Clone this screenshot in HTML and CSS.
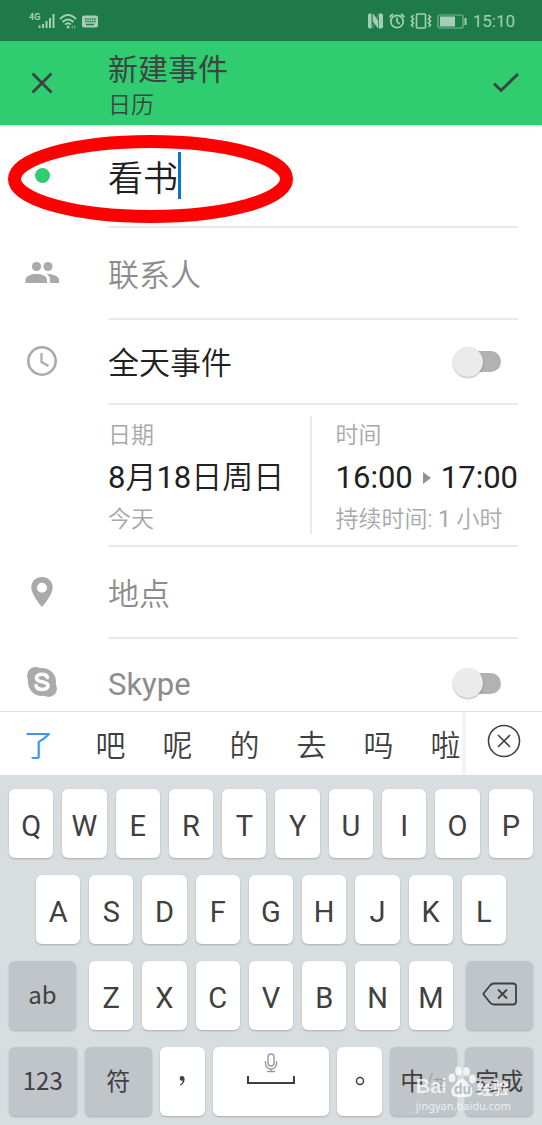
FILE: index.html
```html
<!DOCTYPE html>
<html lang="zh-CN">
<head>
<meta charset="utf-8">
<meta name="viewport" content="width=device-width, initial-scale=1">
<title>新建事件</title>
<link rel="stylesheet" href="styles.css">
</head>
<body>
<div class="status">
  <div class="status-group">
    <svg class="icon" width="28" height="20" viewBox="0 0 28 20">
      <text class="net" x="1" y="9">4G</text>
      <path d="M11.500 14.500v2.500M15 13v4M18.500 10v7M22 7v10M25.500 3v14" stroke="currentColor" stroke-width="2"/>
    </svg>
    <svg class="icon" width="20" height="20" viewBox="0 0 20 20">
      <path d="M2 8q8-8 16 0M4.500 11q5.500-5 11 0M7 13.500q3-2.500 6 0" fill="none" stroke="currentColor" stroke-width="2"/>
      <circle cx="10" cy="16" r="1.500" fill="currentColor"/><path d="M13 16l2-2v4zM18 16l-2-2v4z" fill="currentColor" opacity=".6"/>
    </svg>
    <svg class="icon" width="20" height="20" viewBox="0 0 20 20">
      <rect x="2" y="4.500" width="16" height="12" rx="2" fill="currentColor"/>
      <path d="M5 8h11M5 10.500h11" stroke="#1e7a46" stroke-width="1.500" stroke-dasharray="1.500 .8"/><path d="M6 13.500h8" stroke="#1e7a46" stroke-width="1.500"/>
    </svg>
  </div>
  <div class="status-group">
    <svg class="icon" width="20" height="20" viewBox="0 0 20 20">
      <path d="M6.500 2.500H5Q3 2.500 3 4.500v11q0 2 2 2h1.500zM14 2.500h2q2 0 2 2v11q0 2-2 2h-2z" fill="currentColor"/>
      <path d="M8 3l5 6.500v7.500L8 10.500zM8 13v4M13 3v4" fill="currentColor" stroke="currentColor" stroke-width=".6"/>
    </svg>
    <svg class="icon" width="20" height="20" viewBox="0 0 20 20" fill="none" stroke="currentColor" stroke-width="1.700">
      <circle cx="10" cy="10.500" r="6.200"/><path d="M10 6.500v4.200l2.500 2.500M2.500 6l3.500-3M17.500 6L14 3"/>
    </svg>
    <svg class="icon" width="24" height="20" viewBox="0 0 24 20" fill="none" stroke="currentColor" stroke-width="1.600">
      <rect x="7.500" y="3" width="9" height="14" rx="1"/><path d="M4.500 4l-2 2 2 2-2 2 2 2-2 2 2 2M19.500 4l2 2-2 2 2 2-2 2 2 2-2 2"/>
    </svg>
    <svg class="icon" width="32" height="20" viewBox="0 0 32 20">
      <rect x="3" y="4" width="25" height="13" rx="2" fill="none" stroke="currentColor" stroke-width="1.200" opacity=".7"/>
      <rect x="5" y="5.500" width="15" height="10" fill="currentColor"/><path d="M30.500 7v7" stroke="currentColor" stroke-width="2"/>
    </svg>
    <span class="clock">15:10</span>
  </div>
</div>

<header class="header">
  <button class="icon-button" type="button" aria-label="关闭">
    <svg class="icon" width="24" height="24" viewBox="0 0 24 24"><path d="M2.500 2.500l19 19M21.500 2.500l-19 19" stroke="currentColor" stroke-width="2.800"/></svg>
  </button>
  <div class="heading">
    <h1 class="heading-title">新建事件</h1>
    <div class="heading-sub">日历</div>
  </div>
  <button class="icon-button save" type="button" aria-label="保存">
    <svg class="icon" width="28" height="24" viewBox="0 0 28 24"><path d="M2 12.500l7 7L26 3" fill="none" stroke="currentColor" stroke-width="3"/></svg>
  </button>
</header>

<form class="form">
  <div class="row row-title">
    <span class="lead"><span class="dot"></span></span>
    <div class="body">
      <input class="text-input title-input" type="text" aria-label="标题" value="看书">
      <span class="caret"></span>
    </div>
    <svg class="ring" width="286" height="90" viewBox="0 0 286 90"><ellipse cx="142.500" cy="45" rx="136" ry="37.500" fill="none" stroke="#f00" stroke-width="13"/></svg>
  </div>
  <div class="row row-text">
    <span class="lead">
      <svg class="icon" width="34" height="24" viewBox="0 0 34 24" fill="currentColor">
        <circle cx="11.500" cy="5.500" r="4.600"/><circle cx="23" cy="5.500" r="4.600"/>
        <path d="M0.500 22v-3.500c0-3.500 6-5.500 11-5.500s10.500 2 10.500 5.500V22zM22 13c5 0 12 2 12 5.500V22h-9v-3.500c0-2.500-1.500-4.300-3.500-5.500z"/>
      </svg>
    </span>
    <div class="body"><input class="text-input" type="text" aria-label="联系人" placeholder="联系人"></div>
  </div>
  <div class="row row-day">
    <span class="lead">
      <svg class="icon" width="32" height="32" viewBox="0 0 32 32" fill="none" stroke="currentColor"><circle cx="16" cy="16" r="13.700" stroke-width="2.600"/><path d="M15.500 8v9l7 4" stroke-width="2.200"/></svg>
    </span>
    <div class="body"><label class="label-strong" for="allday">全天事件</label><input class="switch" id="allday" type="checkbox" role="switch"></div>
  </div>
  <div class="row row-when">
    <span class="lead"></span>
    <div class="body">
      <div class="when date">
        <span class="when-label">日期</span>
        <span class="when-value">8<span class="cjk">月</span>18<span class="cjk">日周日</span></span>
        <span class="when-label">今天</span>
      </div>
      <div class="when time">
        <span class="when-label">时间</span>
        <span class="when-value range"><span>16:00</span>
          <svg class="icon arrow" width="8" height="12" viewBox="0 0 8 12"><path d="M0 0l8 6-8 6z" fill="currentColor"/></svg>
          <span>17:00</span></span>
        <span class="when-label">持续时间: <span class="count">1</span> 小时</span>
      </div>
    </div>
  </div>
  <div class="row row-text">
    <span class="lead">
      <svg class="icon" width="22" height="30" viewBox="0 0 22 30"><path d="M11 0C4.800 0 .3 4.600.3 10.500.3 18 11 30 11 30s10.700-12 10.700-19.500C21.700 4.600 17.200 0 11 0zm0 5.700a5 5 0 1 1 0 10 5 5 0 0 1 0-10z" fill="currentColor" fill-rule="evenodd"/></svg>
    </span>
    <div class="body"><input class="text-input" type="text" aria-label="地点" placeholder="地点"></div>
  </div>
  <div class="row row-skype">
    <span class="lead">
      <svg class="icon" width="32" height="32" viewBox="0 0 32 32">
        <circle cx="16" cy="16" r="14" fill="currentColor"/><circle cx="9.500" cy="9.500" r="8.500" fill="currentColor"/><circle cx="22.500" cy="22.500" r="8.500" fill="currentColor"/>
        <path d="M21.500 11.500c-.7-2.300-2.900-3.200-5.500-3.200-3.200 0-5.500 1.300-5.500 3.600 0 5.200 11.500 2.700 11.500 7.600 0 2.500-2.600 3.900-5.800 3.900-3.400 0-5.700-1.300-6.200-3.800" fill="none" stroke="#fff" stroke-width="3.600" stroke-linecap="round"/>
      </svg>
    </span>
    <div class="body"><label class="label-muted" for="skype">Skype</label><input class="switch" id="skype" type="checkbox" role="switch"></div>
  </div>
</form>

<div class="candidates">
  <div class="words">
    <button class="word current" type="button">了</button><button class="word" type="button">吧</button><button class="word" type="button">呢</button><button class="word" type="button">的</button><button class="word" type="button">去</button><button class="word" type="button">吗</button><button class="word" type="button">啦</button>
  </div>
  <button class="clear" type="button" aria-label="清除">
    <svg class="icon" width="34" height="34" viewBox="0 0 34 34" fill="none" stroke="currentColor" stroke-width="1.600"><circle cx="17" cy="17" r="15.500"/><path d="M11 11l12 12M23 11L11 23"/></svg>
  </button>
</div>

<div class="keyboard">
  <div class="keys">
    <button class="key">Q</button><button class="key">W</button><button class="key">E</button><button class="key">R</button><button class="key">T</button><button class="key">Y</button><button class="key">U</button><button class="key">I</button><button class="key">O</button><button class="key">P</button>
  </div>
  <div class="keys keys-inset">
    <button class="key">A</button><button class="key">S</button><button class="key">D</button><button class="key">F</button><button class="key">G</button><button class="key">H</button><button class="key">J</button><button class="key">K</button><button class="key">L</button>
  </div>
  <div class="keys keys-shift">
    <button class="key key-fn">ab</button>
    <div class="keys">
      <button class="key">Z</button><button class="key">X</button><button class="key">C</button><button class="key">V</button><button class="key">B</button><button class="key">N</button><button class="key">M</button>
    </div>
    <button class="key key-fn" aria-label="退格">
      <svg class="icon" width="36" height="24" viewBox="0 0 36 24" fill="none" stroke="currentColor" stroke-width="1.800"><path d="M12 1.500h19q3 0 3 3v15q0 3-3 3H12Q9.500 22.500 8 20.500L2 13q-1-1 0-2l6-7.500Q9.500 1.500 12 1.500zM16 7.500l9 9M25 7.500l-9 9"/></svg>
    </button>
  </div>
  <div class="keys keys-bottom">
    <button class="key key-fn">123</button>
    <button class="key key-fn">符</button>
    <button class="key key-mark" aria-label="逗号"><svg class="icon" width="10" height="14" viewBox="0 0 10 14"><path d="M5 2a2.400 2.400 0 1 0 0 4.800l.8-.2C5.700 8.500 4.700 9.800 3 10.600l.4.8C6 10.400 7.600 8 7.600 5.200 7.600 3.200 6.600 2 5 2z" fill="currentColor"/></svg></button>
    <button class="key key-space" aria-label="空格">
      <svg class="icon" width="50" height="34" viewBox="0 0 50 34" fill="none"><g stroke="#9a9a9a" stroke-width="1.400"><rect x="22" y="1" width="6" height="12" rx="3"/><path d="M19.500 8v2.500a5.500 5.500 0 0 0 11 0V8M25 16v2.500M21 18.500h8"/></g><path d="M2 23v7h46v-7" stroke="currentColor" stroke-width="2"/></svg>
    </button>
    <button class="key key-mark" aria-label="句号"><svg class="icon" width="10" height="10" viewBox="0 0 10 10"><circle cx="5" cy="5" r="3.500" fill="none" stroke="currentColor" stroke-width="1.500"/></svg></button>
    <button class="key key-fn"><span>中<span class="alt"><span class="slash">/</span>英</span></span></button>
    <button class="key key-fn">完成</button>
  </div>
  <div class="watermark">
    <div class="brand">
      <span class="brand-latin">Bai</span>
      <svg class="icon" width="28" height="32" viewBox="0 0 28 32" fill="currentColor">
        <ellipse cx="4" cy="12" rx="3.400" ry="4.400"/><ellipse cx="10.500" cy="5" rx="3.400" ry="4.600"/><ellipse cx="18.500" cy="5.500" rx="3.400" ry="4.600"/><ellipse cx="24.500" cy="13" rx="3.400" ry="4.400"/>
        <path d="M14 13c4 0 5 4 8 6.500 3.500 3 4 11-2 11.500-3 .3-9 .3-12 0-6-.5-6-8-2-11.500C9 17 10 13 14 13z"/>
        <text class="paw-text" x="6" y="28">du</text>
      </svg>
      <span class="brand-cjk">经验</span>
    </div>
    <div class="site">jingyan.baidu.com</div>
  </div>
</div>
</body>
</html>
```
FILE: styles.css
```css
* { box-sizing: border-box; }

body {
  margin: 0;
  background: #fff;
  color: #212121;
  font-family: Roboto, "Noto Sans CJK SC", sans-serif;
}

button {
  margin: 0;
  padding: 0;
  border: 0;
  background: none;
  color: inherit;
  font: inherit;
}

.icon { display: block; flex: none; }

/* Status bar */
.status {
  display: flex;
  justify-content: space-between;
  align-items: center;
  height: 41px;
  padding: 0 27px 0 28px;
  background: #1e7a46;
  color: #a5cfb5;
}
.status-group { display: flex; align-items: center; gap: 2px; }
.net { font-size: 9px; font-weight: 700; fill: currentColor; }
.clock { margin-left: 4px; font-size: 17px; line-height: 20px; }

/* Header */
.header {
  display: flex;
  align-items: center;
  height: 84px;
  background: #2fcd70;
  color: #3c4340;
  box-shadow: 0 1px 3px rgba(0, 0, 0, .2);
}
.icon-button { display: grid; place-items: center; width: 84px; height: 84px; }
.save { width: 72px; }
.heading { flex: 1; padding: 6px 0 0 24px; }
.heading-title { margin: 0; font-size: 30px; font-weight: 400; line-height: 40px; }
.heading-sub { font-size: 23px; font-weight: 350; line-height: 32px; }

/* Event form */
.row { display: flex; padding-right: 24px; }
.lead {
  display: flex;
  flex: none;
  align-items: center;
  justify-content: center;
  width: 84px;
  margin-right: 24px;
  padding-bottom: 3px;
  color: #aaa;
}
.body {
  display: flex;
  flex: 1;
  align-items: center;
  min-width: 0;
  border-bottom: 2px solid #eaeaea;
}
.row-title { position: relative; height: 103px; }
.row-text { height: 92px; }
.row-day { height: 85px; }
.row-when { height: 142px; }
.row-skype { height: 72px; padding-top: 16px; }
.row-skype .body { border-bottom: 0; }

.dot { width: 15px; height: 15px; border-radius: 50%; background: #2fcd70; }
.text-input {
  width: 100%;
  padding: 5px 0 0;
  border: 0;
  outline: 0;
  background: none;
  color: #212121;
  font: 350 31px/46px Roboto, "Noto Sans CJK SC", sans-serif;
}
.text-input::placeholder { color: #8c8c8c; opacity: 1; }
.title-input { height: 50px; padding: 0; font-size: 35px; }
.caret {
  position: absolute;
  top: 27px;
  left: 178px;
  width: 3px;
  height: 47px;
  background: #0b75c9;
}
.ring { position: absolute; top: 9px; left: 8px; }
.label-strong, .label-muted { flex: 1; font-size: 31px; line-height: 46px; }
.label-strong { padding-top: 5px; font-weight: 350; }
.label-muted { padding-top: 4px; color: #8c8c8c; }

.switch {
  display: grid;
  align-items: center;
  width: 48px;
  height: 32px;
  margin: 0 17px 0 0;
  appearance: none;
}
.switch::before, .switch::after { content: ""; grid-area: 1 / 1; }
.switch::before {
  justify-self: end;
  width: 38px;
  height: 21px;
  border-radius: 11px;
  background: #b2b2b2;
}
.switch::after {
  width: 30px;
  height: 30px;
  border-radius: 50%;
  background: #ebebeb;
  box-shadow: 0 1px 2px rgba(0, 0, 0, .3);
}

.when { display: flex; flex-direction: column; height: 118px; padding-top: 3px; }
.date { flex: 1; }
.time { flex: none; padding-left: 24px; border-left: 2px solid #eaeaea; }
.when-label { color: #a8a8a8; font-size: 23px; font-weight: 350; line-height: 34px; }
.when-value { font-size: 31px; line-height: 50px; }
.cjk { font-weight: 350; }
.count { font-weight: 400; }
.range { display: flex; align-items: center; gap: 10px; }
.arrow { color: #929292; }

/* Candidate words */
.candidates {
  display: flex;
  height: 64px;
  border-top: 1px solid #d9dddd;
  background: #fff;
  color: #404040;
}
.words { display: flex; flex: 1; min-width: 0; overflow: hidden; border-right: 4px solid #f2f5f6; }
.word { flex: none; width: 67px; padding-bottom: 2px; font-size: 30px; font-weight: 350; }
.current { width: 77px; color: #3e96f4; }
.clear { display: grid; place-items: center; width: 76px; padding-bottom: 5px; }

/* Keyboard */
.keyboard {
  position: relative;
  display: flex;
  flex-direction: column;
  gap: 17px;
  padding: 14px 9px 10px;
  background: #d8dddf;
  color: #404040;
}
.keys { display: flex; flex: 1; gap: 9px; }
.keys-inset { padding: 0 27px; }
.key {
  display: grid;
  flex: 1 1 0;
  place-items: center;
  min-width: 0;
  height: 69px;
  padding-top: 4px;
  border-radius: 6px;
  background: #fff;
  box-shadow: 0 1px 2px rgba(0, 0, 0, .22);
  font-size: 29px;
}
.key-fn {
  padding: 0 0 4px;
  background: #c0c5c9;
  font-family: "Noto Sans CJK SC", sans-serif;
  font-size: 24px;
  font-weight: 400;
}
.keys-shift { display: grid; grid-template-columns: 67fr 364fr 67fr; gap: 13px; }
.keys-bottom { display: grid; grid-template-columns: 67fr 67fr 44fr 116fr 44fr 67fr 67fr; gap: 8px; }
.key-mark { padding: 0 0 2px; }
.key-space { padding: 0 0 24px; }
.alt { color: #999ea1; font-size: 14px; }
.slash { font-size: 22px; font-weight: 300; }

.watermark {
  position: absolute;
  right: 31px;
  bottom: 12px;
  color: rgba(255, 255, 255, .75);
  pointer-events: none;
}
.brand { display: flex; align-items: flex-end; gap: 1px; height: 32px; }
.brand-latin { font: 700 20px/24px "Liberation Sans", sans-serif; }
.brand-cjk { font: 700 16px/22px "Noto Sans CJK SC", sans-serif; }
.paw-text { font: 700 14px "Liberation Sans", sans-serif; fill: #b5babd; }
.site { font: 11px/16px "Noto Sans", sans-serif; }
```
